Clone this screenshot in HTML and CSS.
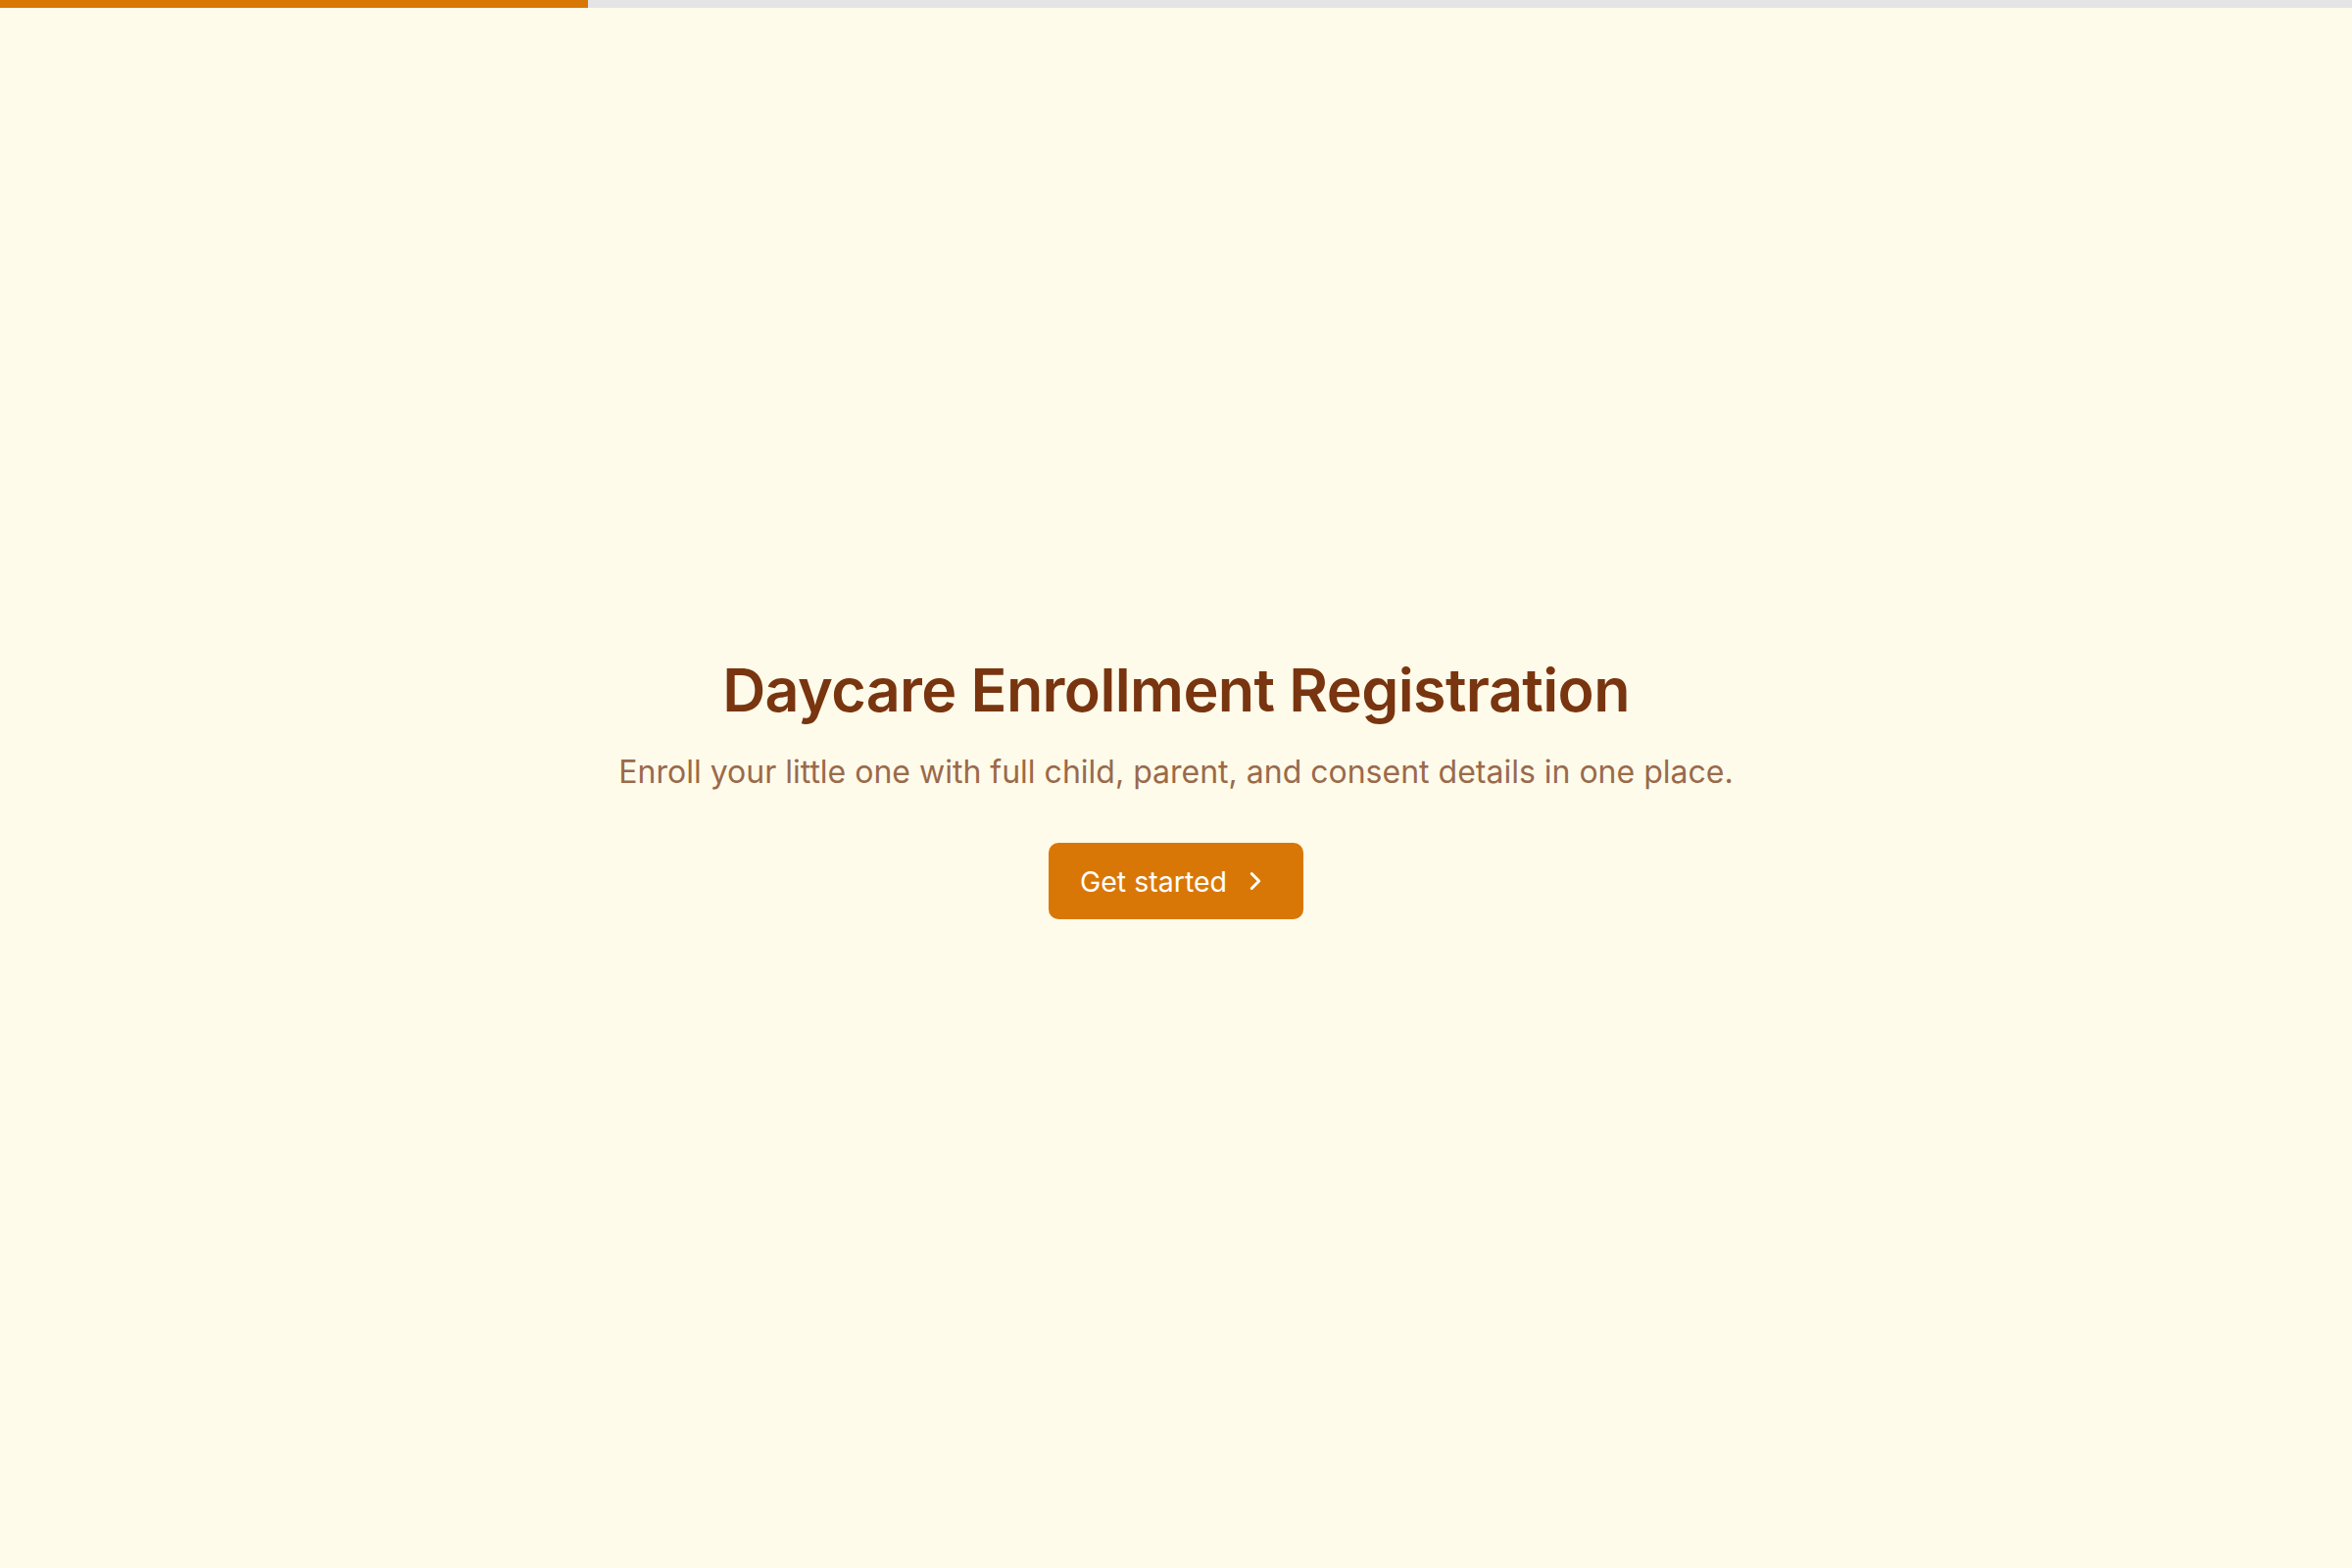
FILE: index.html
```html
<!DOCTYPE html>
<html lang="en">
<head>
    <meta charset="UTF-8">
    <meta name="viewport" content="width=device-width, initial-scale=1.0">
    <title>Daycare Enrollment Registration</title>
    <link rel="stylesheet" href="styles.css">
</head>
<body>

    <!-- Progress -->
    <div class="progress">
        <div class="progress-fill" style="width: 25%"></div>
    </div>

    <!-- Welcome Screen -->
    <main class="welcome">
        <h1>Daycare Enrollment Registration</h1>
        <p class="lead">Enroll your little one with full child, parent, and consent details in one place.</p>
        <button class="start-btn" type="button">
            Get started
            <svg width="30" height="30" viewBox="0 0 24 24" fill="none" stroke="currentColor" stroke-width="2" stroke-linecap="round" stroke-linejoin="round">
                <path d="m9 18 6-6-6-6"></path>
            </svg>
        </button>
    </main>

</body>
</html>
```

FILE: styles.css
```css
/* General Reset */
* {
    margin: 0;
    padding: 0;
    box-sizing: border-box;
}

html, body {
    height: 100%;
}

body {
    font-family: Inter, "Noto Sans", sans-serif;
    background-color: #fffbea;
    color: #78350f;
    display: flex;
    flex-direction: column;
}

/* Progress bar */
.progress {
    height: 8px;
    background-color: #e4e4e7;
    flex-shrink: 0;
}

.progress-fill {
    height: 100%;
    background-color: #d97706;
}

/* Welcome */
.welcome {
    flex: 1;
    display: flex;
    flex-direction: column;
    align-items: center;
    justify-content: center;
    text-align: center;
    padding: 0 48px 2px;
}

.welcome h1 {
    font-size: 61px;
    font-weight: 600;
    letter-spacing: -0.01em;
    line-height: 72px;
    color: #78350f;
}

.lead {
    margin-top: 24px;
    font-size: 32px;
    line-height: 48px;
    color: #9a6a4b;
}

.start-btn {
    margin-top: 48px;
    display: inline-flex;
    align-items: center;
    gap: 14px;
    height: 78px;
    padding: 0 34px 0 32px;
    font-family: inherit;
    font-size: 28.5px;
    font-weight: 400;
    color: #fff;
    background-color: #d97706;
    border: none;
    border-radius: 10px;
    cursor: pointer;
}

.start-btn svg {
    stroke-width: 2.4;
}
```
